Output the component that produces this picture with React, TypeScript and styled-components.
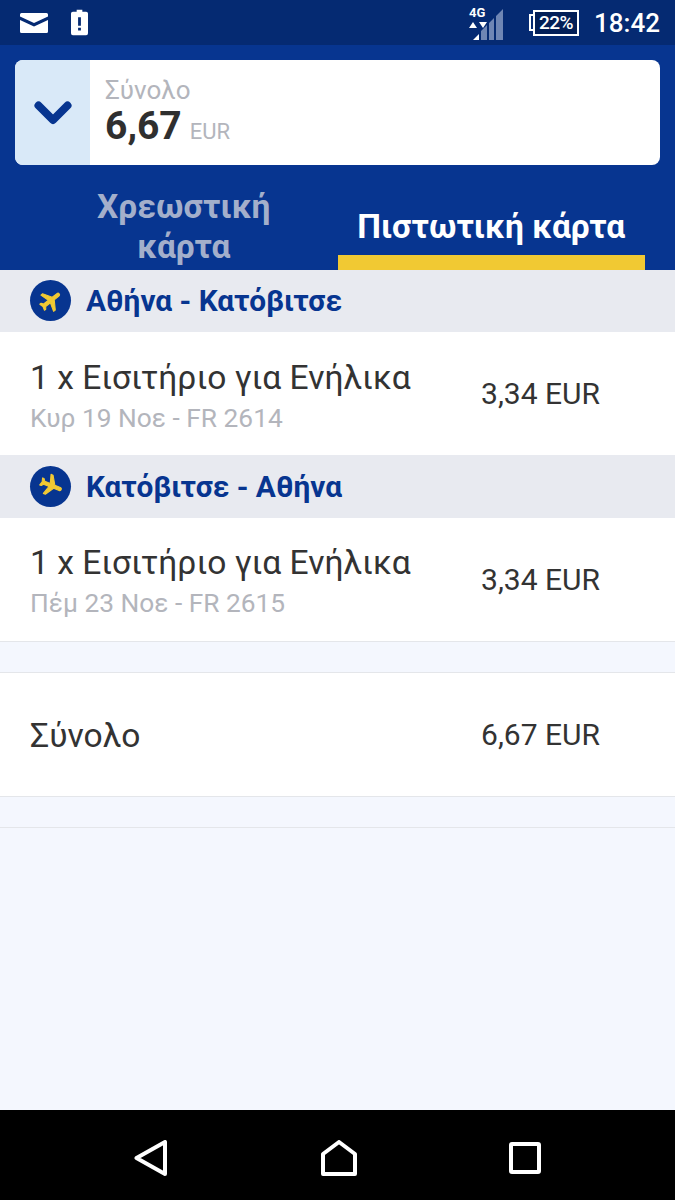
import styled, { createGlobalStyle } from 'styled-components';

const GlobalStyle = createGlobalStyle`
  html, body {
    margin: 0;
    padding: 0;
    background: #f4f7fe;
  }
  * {
    box-sizing: border-box;
  }
`;

const Page = styled.div`
  width: 675px;
  height: 1200px;
  display: flex;
  flex-direction: column;
  overflow: hidden;
  background: #f4f7fe;
  font-family: 'Roboto', 'Noto Sans', sans-serif;
`;

const StatusBar = styled.div`
  height: 45px;
  flex-shrink: 0;
  padding: 0 15px 0 20px;
  background: #052a72;
  display: flex;
  align-items: center;
  justify-content: space-between;
`;

const StatusLeft = styled.div`
  display: flex;
  align-items: center;
  gap: 23px;
`;

const StatusRight = styled.div`
  display: flex;
  align-items: center;
`;

const Signal = styled.div`
  position: relative;
  width: 36px;
  height: 34px;
  margin-right: 24px;
`;

const NetLabel = styled.span`
  position: absolute;
  top: 0;
  left: 0;
  font: 700 13px/14px 'Roboto', sans-serif;
  color: #fff;
`;

const Battery = styled.div`
  display: flex;
  align-items: center;
  margin-right: 15px;
`;

const BatteryNub = styled.div`
  width: 4px;
  height: 17px;
  border: 2px solid #fff;
  border-right: none;
`;

const BatteryBody = styled.div`
  width: 46px;
  height: 26px;
  border: 2px solid #fff;
  background: #031f57;
  color: #fff;
  font: 500 19px/22px 'Roboto', sans-serif;
  text-align: center;
  letter-spacing: -0.5px;
`;

const Clock = styled.span`
  font: 500 26px 'Roboto', sans-serif;
  color: #fff;
`;

const Header = styled.div`
  height: 224.5px;
  flex-shrink: 0;
  padding: 15px 15px 0;
  background: #073590;
  display: flex;
  flex-direction: column;
`;

const SummaryCard = styled.div`
  height: 105px;
  flex-shrink: 0;
  border-radius: 8px;
  overflow: hidden;
  background: #fff;
  display: flex;
`;

const Toggle = styled.div`
  width: 75px;
  background: #d9e9f8;
  display: flex;
  align-items: center;
  justify-content: center;
`;

const SummaryText = styled.div`
  padding: 16px 0 0 15px;
  display: flex;
  flex-direction: column;
`;

const SummaryLabel = styled.div`
  font-size: 26px;
  line-height: 28px;
  color: #b3b5bc;
`;

const SummaryAmount = styled.div`
  display: flex;
  align-items: baseline;
  gap: 8px;
  color: #2f2f2f;
`;

const AmountValue = styled.span`
  font-size: 39px;
  line-height: 44px;
  font-weight: 700;
`;

const AmountCurrency = styled.span`
  font-size: 22px;
  line-height: 24px;
  color: #b3b5bc;
`;

const Tabs = styled.div`
  height: 104.5px;
  padding: 0 15px;
  display: flex;
`;

const Tab = styled.div<{ $active?: boolean }>`
  position: relative;
  flex: 1 1 0;
  min-width: 0;
  padding: 20px 40px 0;
  display: flex;
  align-items: center;
  justify-content: center;
  text-align: center;
  white-space: ${(props) => (props.$active ? 'nowrap' : 'normal')};
  font-size: 33.5px;
  line-height: 40px;
  font-weight: 700;
  color: ${(props) => (props.$active ? '#fff' : '#a3afcb')};

  &::after {
    content: '';
    position: absolute;
    left: 0;
    right: 0;
    bottom: 0;
    height: 15px;
    background: ${(props) => (props.$active ? '#f1c933' : 'transparent')};
  }
`;

const Content = styled.div`
  flex: 1;
`;

const FlightHeader = styled.div`
  height: 62.5px;
  padding-left: 30px;
  background: #e8eaf0;
  display: flex;
  align-items: center;
  gap: 15px;
`;

const Badge = styled.div`
  width: 41px;
  height: 41px;
  border-radius: 50%;
  background: #073590;
  display: flex;
  align-items: center;
  justify-content: center;
`;

const PlaneSvg = styled.svg<{ $rotate: number }>`
  width: 26px;
  height: 26px;
  transform: rotate(${(props) => props.$rotate}deg);
`;

const Route = styled.span`
  font-size: 29.8px;
  font-weight: 700;
  color: #073590;
`;

const Row = styled.div`
  height: 123px;
  padding: 0 75px 0 30px;
  background: #fff;
  display: flex;
  align-items: center;
  justify-content: space-between;
`;

const TotalRow = styled(Row)`
  height: 122.5px;
`;

const RowText = styled.div`
  margin-top: 3px;
  display: flex;
  flex-direction: column;
`;

const RowTitle = styled.div`
  font-size: 33.6px;
  line-height: 42px;
  color: #333;
`;

const TotalLabel = styled(RowTitle)`
  margin-top: 4px;
`;

const RowSub = styled.div`
  margin-top: 3px;
  font-size: 26.3px;
  line-height: 32px;
  color: #b3b5bc;
`;

const Price = styled.div`
  font-size: 30px;
  color: #333;
`;

const Divider = styled.div`
  height: 1px;
  background: #e4e6ea;
`;

const Gap = styled.div`
  height: 30.5px;
`;

const NavBar = styled.div`
  height: 90px;
  flex-shrink: 0;
  padding: 6px 134px 0;
  background: #000;
  display: flex;
  align-items: center;
  justify-content: space-between;
`;

const PLANE_PATH =
  'M21 16v-2l-8-5V3.5c0-.83-.67-1.5-1.5-1.5S10 2.67 10 3.5V9l-8 5v2l8-2.5V19l-2 1.5V22l3.5-1 3.5 1v-1.5L13 19v-5.5l8 2.5z';

const flights = [
  { route: 'Αθήνα - Κατόβιτσε', date: 'Κυρ 19 Νοε - FR 2614', rotate: 52 },
  { route: 'Κατόβιτσε - Αθήνα', date: 'Πέμ 23 Νοε - FR 2615', rotate: 112 },
];

const PlaneBadge = ({ rotate }: { rotate: number }) => (
  <Badge>
    <PlaneSvg viewBox="0 0 24 24" $rotate={rotate}>
      <path d={PLANE_PATH} fill="#f1c933" stroke="#f1c933" strokeWidth="1" strokeLinejoin="round" />
    </PlaneSvg>
  </Badge>
);

export default function App() {
  return (
    <Page>
      <GlobalStyle />
      <StatusBar>
        <StatusLeft>
          <svg width="28" height="20" viewBox="0 0 28 20">
            <path d="M0 1.5A1.5 1.5 0 0 1 1.5 0h25A1.5 1.5 0 0 1 28 1.5v2L14 10 0 3.500z" fill="#fff" />
            <path d="M0 7l14 6.500L28 7v11.500a1.500 1.500 0 0 1-1.500 1.500h-25A1.500 1.500 0 0 1 0 18.500z" fill="#fff" />
          </svg>
          <svg width="17" height="27" viewBox="0 0 18 27">
            <path
              fillRule="evenodd"
              d="M6 0h6v2h4a2 2 0 0 1 2 2v21a2 2 0 0 1-2 2H2a2 2 0 0 1-2-2V4a2 2 0 0 1 2-2h4zM7.500 8v9h3V8zM7.500 19v3h3v-3z"
              fill="#fff"
            />
          </svg>
        </StatusLeft>
        <StatusRight>
          <Signal>
            <NetLabel>4G</NetLabel>
            <svg width="36" height="34" viewBox="0 0 36 34">
              <path d="M0 22l4-6 4 6z M10 16l4 6 4-6z" fill="#fff" />
              <path d="M10 34v-6l-6 6z" fill="#fff" />
              <path d="M12 34v-9l6-6v15z M20 34V17l5-5v22z M27 34V10l7-7v31z" fill="#6f86b4" />
            </svg>
          </Signal>
          <Battery>
            <BatteryNub />
            <BatteryBody>22%</BatteryBody>
          </Battery>
          <Clock>18:42</Clock>
        </StatusRight>
      </StatusBar>

      <Header>
        <SummaryCard>
          <Toggle>
            <svg width="38" height="24" viewBox="0 0 38 24">
              <path d="M4.500 4.500L19 19 33.500 4.500" fill="none" stroke="#073590" strokeWidth="8" strokeLinecap="round" strokeLinejoin="round" />
            </svg>
          </Toggle>
          <SummaryText>
            <SummaryLabel>Σύνολο</SummaryLabel>
            <SummaryAmount>
              <AmountValue>6,67</AmountValue>
              <AmountCurrency>EUR</AmountCurrency>
            </SummaryAmount>
          </SummaryText>
        </SummaryCard>
        <Tabs>
          <Tab>Χρεωστική κάρτα</Tab>
          <Tab $active>Πιστωτική κάρτα</Tab>
        </Tabs>
      </Header>

      <Content>
        {flights.map((flight) => (
          <div key={flight.route}>
            <FlightHeader>
              <PlaneBadge rotate={flight.rotate} />
              <Route>{flight.route}</Route>
            </FlightHeader>
            <Row>
              <RowText>
                <RowTitle>1 x Εισιτήριο για Ενήλικα</RowTitle>
                <RowSub>{flight.date}</RowSub>
              </RowText>
              <Price>3,34 EUR</Price>
            </Row>
          </div>
        ))}
        <Divider />
        <Gap />
        <Divider />
        <TotalRow>
          <TotalLabel>Σύνολο</TotalLabel>
          <Price>6,67 EUR</Price>
        </TotalRow>
        <Divider />
        <Gap />
        <Divider />
      </Content>

      <NavBar>
        <svg width="34" height="36" viewBox="0 0 34 36">
          <path d="M2.500 18L31 2v32z" fill="none" stroke="#fff" strokeWidth="4" strokeLinejoin="round" />
        </svg>
        <svg width="36" height="36" viewBox="0 0 36 36">
          <path d="M2 34V14L18 2l16 12v20z" fill="none" stroke="#fff" strokeWidth="4" strokeLinejoin="round" />
        </svg>
        <svg width="32" height="32" viewBox="0 0 32 32">
          <rect x="2" y="2" width="28" height="28" rx="1" fill="none" stroke="#fff" strokeWidth="4" />
        </svg>
      </NavBar>
    </Page>
  );
}
